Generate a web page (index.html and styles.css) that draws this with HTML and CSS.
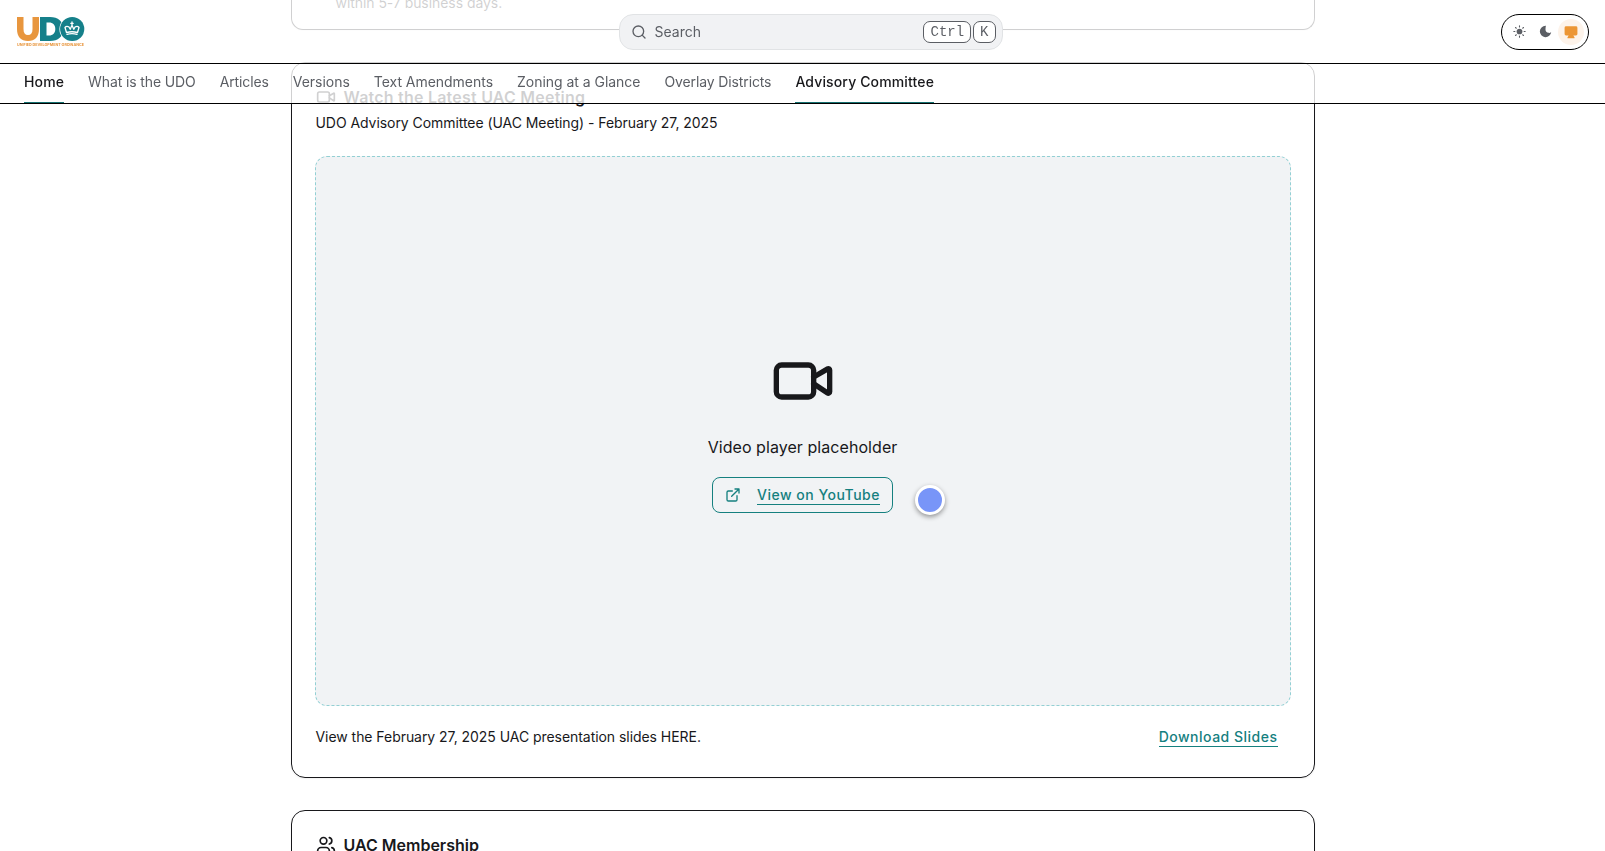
FILE: index.html
```
<!DOCTYPE html>
<html lang="en">
<head>
<meta charset="utf-8">
<title>UDO Advisory Committee</title>
<link rel="stylesheet" href="styles.css">
</head>
<body>
<header class="site-header">
  <div class="topbar">
    <a class="logo" aria-label="UDO">
      <svg width="70" height="32" viewBox="0 0 70 32">
        <path d="M1 1h6.500v12c0 4 1.500 6 4.500 6s4.500-2 4.500-6V1H23v12c0 8-4 12-11 12S1 21 1 13z" fill="#e8963e"/>
        <path fill-rule="evenodd" d="M24 1h10c8 0 13.500 4.500 13.500 12S42 25 34 25H24zM30.500 6.500v13H33c4 0 6.300-2.500 6.300-6.500S37 6.500 33 6.500z" fill="#15808a"/>
        <circle cx="56.200" cy="13" r="12.800" fill="#fff"/>
        <circle cx="56.200" cy="13" r="12.100" fill="#15808a"/>
        <path d="M50.500 16.500l-1.500-5q1.500-2 4-.5l1.200 2.300 1.800-4 1.800 4L59 11q2.500-1.500 4 .5l-1.500 5q-5.500-1.500-11 0zM51 18.300q5-1.200 10 0M56 6v3M54.800 7.300h2.400" fill="none" stroke="#fff" stroke-width="1.300"/>
        <text x="1" y="30.200" textLength="67" lengthAdjust="spacingAndGlyphs" class="logo-caption">UNIFIED DEVELOPMENT ORDINANCE</text>
      </svg>
    </a>
    <div class="search">
      <svg class="search-icon" viewBox="0 0 24 24"><circle cx="11" cy="11" r="8"/><path d="m21 21-4.300-4.300"/></svg>
      <span class="search-label">Search</span>
      <kbd>Ctrl</kbd><kbd>K</kbd>
    </div>
    <div class="theme-switch">
      <span class="theme"><svg viewBox="0 0 24 24"><circle cx="12" cy="12" r="5.300"/><path d="M12 1.500v2M12 20.500v2M1.500 12h2M20.500 12h2M4.600 4.600 6 6M18 18l1.400 1.400M4.600 19.400 6 18M18 6l1.400-1.400" class="rays"/></svg></span>
      <span class="theme"><svg viewBox="0 0 24 24"><path d="M12 1.500A10.500 10.500 0 1 0 22.500 13c-1.300 1.300-3 2-4.800 1.500A6 6 0 0 1 12 8.500c0-2.600.2-5 .8-7z"/></svg></span>
      <span class="theme active"><svg viewBox="0 0 24 24"><path d="M3.500 2h17A2.500 2.500 0 0 1 23 4.500v11a2.500 2.500 0 0 1-2.500 2.500H16l2 3v1.500H6V21l2-3H3.500A2.500 2.500 0 0 1 1 15.500v-11A2.500 2.500 0 0 1 3.500 2z"/></svg></span>
    </div>
  </div>
  <nav class="tabs">
    <a class="tab current">Home</a>
    <a class="tab tight">What is the UDO</a>
    <a class="tab tight">Articles</a>
    <a class="tab">Versions</a>
    <a class="tab">Text Amendments</a>
    <a class="tab">Zoning at a Glance</a>
    <a class="tab tight">Overlay Districts</a>
    <a class="tab current">Advisory Committee</a>
  </nav>
</header>

<main class="content">
  <section class="card card-notice"><p>within 5-7 business days.</p></section>

  <section class="card card-video">
    <h2 class="card-title spaced">
      <svg class="title-icon" viewBox="0 0 24 24"><path d="m16 13 5.223 3.482a.5.5 0 0 0 .777-.416V7.870a.5.5 0 0 0-.752-.432L16 10.500"/><rect x="2" y="6" width="14" height="12" rx="2"/></svg>
      Watch the Latest UAC Meeting
    </h2>
    <p class="subtitle">UDO Advisory Committee (UAC Meeting) - February 27, 2025</p>
    <div class="player">
      <svg class="player-icon" viewBox="0 0 24 24"><path d="m16 13 5.223 3.482a.5.5 0 0 0 .777-.416V7.870a.5.5 0 0 0-.752-.432L16 10.500"/><rect x="2" y="6" width="14" height="12" rx="2"/></svg>
      <p class="player-text">Video player placeholder</p>
      <a class="button">
        <svg class="button-icon" viewBox="0 0 24 24"><path d="M15 3h6v6M10 14 21 3M18 13v6a2 2 0 0 1-2 2H5a2 2 0 0 1-2-2V8a2 2 0 0 1 2-2h6"/></svg>
        <span class="link">View on YouTube</span>
      </a>
      <span class="pointer"></span>
    </div>
    <div class="slides">
      <p>View the February 27, 2025 UAC presentation slides HERE.</p>
      <a class="link">Download Slides</a>
    </div>
  </section>

  <section class="card card-members">
    <h2 class="card-title">
      <svg class="title-icon" viewBox="0 0 24 24"><path d="M16 21v-2a4 4 0 0 0-4-4H6a4 4 0 0 0-4 4v2"/><circle cx="9" cy="7" r="4"/><path d="M22 21v-2a4 4 0 0 0-3-3.870M16 3.130a4 4 0 0 1 0 7.750"/></svg>
      UAC Membership
    </h2>
  </section>
</main>
</body>
</html>
```
FILE: styles.css
```
* { box-sizing: border-box; }
html, body { height: 100%; }
body {
  margin: 0;
  overflow: hidden;
  background: #fff;
  color: #18181b;
  font: 14px/20px Inter, sans-serif;
}
p, h2 { margin: 0; }
svg { flex: none; fill: none; stroke: currentColor; stroke-width: 2; stroke-linecap: round; stroke-linejoin: round; }

.site-header { position: fixed; z-index: 5; top: 0; left: 0; width: 100%; background: rgba(255, 255, 255, .8); }
.topbar {
  display: grid;
  grid-template-columns: 1fr 384px 1fr;
  align-items: center;
  height: 64px;
  padding: 0 16px;
  border-bottom: 1px solid #000;
}
.logo { display: flex; }
.logo svg { stroke: none; }
.logo-caption { font: 700 3.800px Inter, sans-serif; fill: #e8963e; }
.search {
  display: flex;
  align-items: center;
  gap: 2px;
  width: 384px;
  height: 36px;
  margin-left: 8px;
  padding: 0 6px 0 11px;
  border: 1px solid #e1e3e5;
  border-radius: 14px;
  background: #f1f2f4;
  color: #5b5e64;
}
.search-icon { width: 16px; height: 16px; }
.search-label { flex: 1; margin-left: 6px; }
kbd {
  height: 22px;
  padding: 0 6px;
  border: 1px solid #5b5e64;
  border-radius: 7px;
  background: #fff;
  font: 14px/20px "Liberation Mono", monospace;
}
.theme-switch {
  justify-self: end;
  display: flex;
  align-items: center;
  width: 88px;
  height: 36px;
  padding: 0 4px;
  border: 1px solid #000;
  border-radius: 18px;
}
.theme { display: grid; place-items: center; width: 26px; height: 26px; border-radius: 50%; color: #5b5e64; }
.theme svg { width: 13px; height: 13px; fill: currentColor; stroke: none; }
.theme .rays { stroke: currentColor; stroke-width: 2; }
.active { background: #fdf3ea; color: #ec9635; }
.active svg { width: 14px; height: 14px; }

.tabs { display: flex; gap: 24px; height: 40px; padding: 0 24px; border-bottom: 1px solid #000; }
.tab { height: 39px; padding-top: 8px; color: #5b5e64; letter-spacing: -.03px; white-space: nowrap; }
.tight { letter-spacing: -.12px; }
.current { border-bottom: 1px solid #15706f; color: #18181b; font-weight: 500; letter-spacing: .14px; }

.content { display: flex; flex-direction: column; gap: 32px; width: 1024px; margin: 0 auto; }
.card {
  flex: none;
  padding: 23px 24px;
  border: 1px solid #18181b;
  border-radius: 14px;
  box-shadow: 0 1px 2px rgba(0, 0, 0, .06);
}
.card-notice { display: flex; align-items: flex-end; height: 30px; padding: 0 44px 16px; border-top: 0; border-radius: 0 0 12px 12px; letter-spacing: -.06px; }
.card-video { height: 716px; }
.card-members { height: 200px; }
.card-title { display: flex; align-items: center; gap: 8px; height: 22px; font: 600 16px/22px Inter, sans-serif; }
.spaced { letter-spacing: .22px; }
.title-icon { width: 20px; height: 20px; }
.subtitle { margin-top: 5px; letter-spacing: -.06px; }
.player {
  position: relative;
  display: flex;
  flex-direction: column;
  align-items: center;
  height: 550px;
  margin: 23px -1px 0;
  padding-top: 192px;
  border: 1px dashed #93d0d4;
  border-radius: 12px;
  background: #f1f3f5;
}
.player-icon { width: 64px; height: 64px; }
.player-text { margin-top: 22px; font-size: 16px; line-height: 24px; letter-spacing: .06px; }
.button {
  display: flex;
  align-items: center;
  gap: 16px;
  height: 36px;
  margin-top: 18px;
  padding: 0 12px;
  border: 1px solid #15807f;
  border-radius: 8px;
  color: #15807f;
}
.button-icon { width: 16px; height: 16px; }
.link { border-bottom: 1px solid currentColor; color: #15807f; font-weight: 500; line-height: 19px; letter-spacing: .5px; }
.pointer {
  position: absolute;
  left: 599px;
  top: 328px;
  width: 30px;
  height: 30px;
  border: 3px solid #fff;
  border-radius: 50%;
  background: #7895f8;
  box-shadow: 0 2px 5px rgba(0, 0, 0, .4);
}
.slides { display: flex; align-items: center; justify-content: space-between; height: 32px; margin-top: 15px; padding-right: 12px; letter-spacing: -.05px; }
```
